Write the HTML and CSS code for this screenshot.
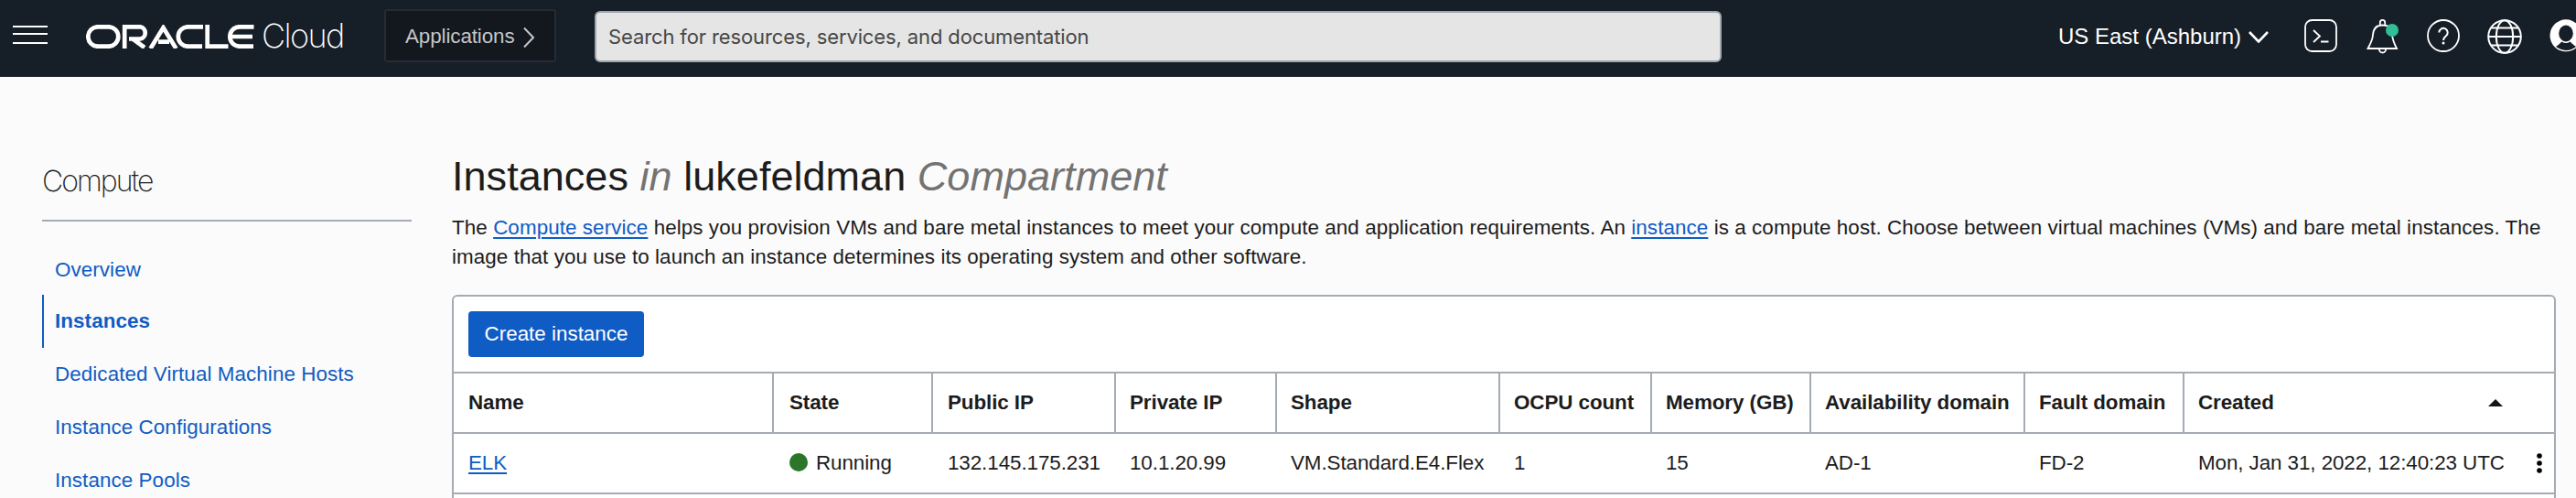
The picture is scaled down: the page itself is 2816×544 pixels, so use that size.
FILE: index.html
```html
<!DOCTYPE html>
<html lang="en">
<head>
<meta charset="utf-8">
<title>Instances | Oracle Cloud</title>
<link rel="stylesheet" href="styles.css">
</head>
<body>
<header class="topbar">
  <svg class="burger" viewBox="0 0 38 20"><path d="M0 1h38M0 9h38M0 19h38" fill="none" stroke="#fff" stroke-width="2"/></svg>
  <div class="logo">
    <svg class="oracle" viewBox="0 0 184 26" role="img" aria-label="Oracle"><g fill="none" stroke="#fff" stroke-width="4.700">
      <rect x="2.300" y="2.300" width="33" height="21.400" rx="10.700"/>
      <path d="M42.200 26V2.300h17a6.700 6.700 0 0 1 0 13.200H47M50.500 15l13.500 10"/>
      <path d="M70.500 26L84.500 3.200 98.500 26M79 18.700h12"/>
      <path d="M128 2.300h-16.500a10.700 10.700 0 0 0 0 21.400h15.500"/>
      <path d="M132.700 0v23.700H155.500"/>
      <path d="M183.500 2.300h-15.500a10.700 10.700 0 0 0 0 21.400h15M158 13h24"/></g></svg>
    <span class="cloud">Cloud</span>
  </div>
  <div class="apps"><span class="apps-text">Applications</span><svg class="chev-r" viewBox="0 0 12 22"><path d="M1 .500l10 10.500L1 21.500" fill="none" stroke="#c4c6c8" stroke-width="2"/></svg></div>
  <div class="search">Search for resources, services, and documentation</div>
  <div class="region"><span>US East (Ashburn)</span><svg class="chev-d" viewBox="0 0 22 13"><path d="M1 1l10 10.500L21 1" fill="none" stroke="#fff" stroke-width="2.600"/></svg></div>
  <div class="icons">
    <svg class="ic" viewBox="0 0 40 40"><rect x="3" y="2" width="34" height="34" rx="7.500" fill="none" stroke="#fff" stroke-width="1.800"/><path d="M12 13l7 6.500-7 6.500M20 25.500h8.500" fill="none" stroke="#fff" stroke-width="1.800"/></svg>
    <svg class="ic" viewBox="0 0 40 40"><path d="M4.500 33h31.500C33 27 31.300 23 31 18c0-8-4-10.500-10.500-10.500S10.500 11 10 18c-.3 6-3 10-5.500 15zM17.800 7.500V4.500a2.700 2.700 0 0 1 5.400 0v3M16.800 33.500a3.700 4 0 0 0 7.400 0" fill="none" stroke="#fff" stroke-width="1.800"/><circle cx="31" cy="13" r="7" fill="#31bd96"/></svg>
    <svg class="ic" viewBox="0 0 40 40"><circle cx="20" cy="19" r="17" fill="none" stroke="#fff" stroke-width="1.800"/><path d="M15.300 15.500a4.700 4.700 0 1 1 7.600 3.800c-2 1.500-2.900 2.200-2.900 4.700" fill="none" stroke="#fff" stroke-width="2"/><circle cx="20" cy="27" r="1.500" fill="#fff"/></svg>
    <svg class="ic" viewBox="0 0 40 40"><g fill="none" stroke="#fff" stroke-width="2"><circle cx="20" cy="20" r="17.800"/><ellipse cx="20" cy="20" rx="9.200" ry="17.800"/><path d="M2 20h36M5 10.500h30M5 29.500h30"/></g></svg>
    <svg class="ic" viewBox="0 0 40 40"><circle cx="20" cy="18.800" r="17.500" fill="#fff"/><ellipse cx="20" cy="16.500" rx="7.800" ry="9" fill="#161e27"/><path d="M9 31q3-2 6.500-5.500q4.500 3 9 0q3.500 3.500 6.500 5.500q-10 8-22 0z" fill="#161e27"/></svg>
  </div>
</header>
<div class="page">
  <nav class="side">
    <h2 class="side-title">Compute</h2>
    <a class="nav first">Overview</a>
    <a class="nav on">Instances</a>
    <a class="nav">Dedicated Virtual Machine Hosts</a>
    <a class="nav">Instance Configurations</a>
    <a class="nav last">Instance Pools</a>
  </nav>
  <main class="main">
    <h1 class="title">Instances <i>in</i> lukefeldman <i>Compartment</i></h1>
    <p class="desc">The <a class="lnk">Compute service</a> helps you provision VMs and bare metal instances to meet your compute and application requirements. An <a class="lnk">instance</a> is a compute host. Choose between virtual machines (VMs) and bare metal instances. The<br>image that you use to launch an instance determines its operating system and other software.</p>
    <section class="panel">
      <div class="tools"><button class="create">Create instance</button></div>
      <div class="row head">
        <div class="cell">Name</div><div class="cell">State</div><div class="cell">Public IP</div><div class="cell">Private IP</div><div class="cell">Shape</div><div class="cell">OCPU count</div><div class="cell">Memory (GB)</div><div class="cell">Availability domain</div><div class="cell">Fault domain</div><div class="cell created">Created<svg class="sort" viewBox="0 0 16 8"><path d="M8 0l8 8H0z" fill="#161513"/></svg></div>
      </div>
      <div class="row">
        <div class="cell"><a class="lnk">ELK</a></div><div class="cell"><span class="dot"></span>Running</div><div class="cell">132.145.175.231</div><div class="cell">10.1.20.99</div><div class="cell">VM.Standard.E4.Flex</div><div class="cell">1</div><div class="cell">15</div><div class="cell">AD-1</div><div class="cell">FD-2</div><div class="cell created">Mon, Jan 31, 2022, 12:40:23 UTC<svg class="kebab" viewBox="0 0 6 22"><circle cx="3" cy="3" r="2.800"/><circle cx="3" cy="11" r="2.800"/><circle cx="3" cy="19" r="2.800"/></svg></div>
      </div>
    </section>
  </main>
</div>
</body>
</html>
```
FILE: styles.css
```css
* { box-sizing: border-box; }
html, body { margin: 0; height: 544px; overflow: hidden; }
body { background: #fbfbfb; color: #1c1c1c; font: 22.4px/32px "Liberation Sans", Arial, sans-serif; white-space: nowrap; }
a { color: #0f5cc4; }
.topbar { height: 84px; background: #161e27; display: flex; align-items: flex-start; color: #fff; overflow: hidden; }
.burger { width: 38px; height: 20px; margin: 28px 0 0 14px; flex: none; }
.logo { display: flex; margin-left: 42px; width: 326px; height: 84px; flex: none; }
.oracle { width: 184px; height: 26px; margin-top: 27px; flex: none; }
.cloud { font: 250 36px/40px Inter, sans-serif; letter-spacing: -1.6px; margin: 19px 0 0 8px; }
.apps { width: 188px; height: 58px; margin-top: 10px; border: 2px solid #272c34; border-radius: 3px; background: #13171e; color: #c4c6c8; display: flex; align-items: center; padding-left: 21px; flex: none; }
.apps-text { width: 120px; font-size: 22.4px; letter-spacing: -.1px; padding-top: 2px; }
.chev-r { width: 12px; height: 22px; margin-left: 9px; margin-top: 4px; }
.search { width: 1232px; height: 56px; margin: 12px 0 0 42px; border: 2px solid #9ea6af; border-radius: 6px; background: #e5e5e5; color: #474747; padding: 10px 13px; font: 22px/32px Inter, sans-serif; letter-spacing: -.12px; flex: none; }
.region { display: flex; margin-left: 368px; padding-top: 24px; width: 267px; flex: none; font-size: 24px; }
.chev-d { width: 22px; height: 13px; margin: 10px 0 0 8px; }
.icons { display: flex; gap: 27px; margin: 20px 0 0; flex: none; }
.ic { width: 40px; height: 40px; flex: none; }
.page { display: flex; height: 460px; overflow: hidden; }
.side { width: 404px; margin-left: 46px; flex: none; }
.side-title { margin: 0 0 22px; height: 158px; padding-top: 92px; border-bottom: 2px solid #a4abb3; font: 200 32px/44px Inter, sans-serif; letter-spacing: -2px; color: #1c1c1c; }
.nav { display: block; height: 58px; padding: 13px 0 0 12px; border-left: 2px solid transparent; letter-spacing: .08px; }
.nav.on { border-color: #0f5cc4; font-weight: 700; }
.nav.first { padding-top: 15px; }
.nav.last { height: 46px; }
.main { margin-left: 44px; width: 2300px; flex: none; }
.title { margin: 0; padding-top: 82px; font-size: 45px; line-height: 54px; font-weight: 400; letter-spacing: .04px; }
.title i { color: #737373; }
.desc { margin: 13px 0 0; height: 89px; letter-spacing: .08px; }
.lnk { text-decoration: underline; text-decoration-thickness: 2px; text-underline-offset: 3px; }
.panel { border: 2px solid #a4abb3; border-bottom: 0; border-radius: 6px 6px 0 0; background: #fff; height: 222px; }
.tools { height: 84px; padding: 16px 16px; border-bottom: 2px solid #a4abb3; }
.create { display: block; width: 192px; height: 50px; border: 0; border-radius: 4px; background: #0f5cc4; color: #fff; font: 22.4px "Liberation Sans", sans-serif; padding: 0; }
.row { display: grid; grid-template-columns: 350px 174px 200px 176px 244px 166px 174px 234px 174px 1fr; height: 66px; border-bottom: 2px solid #a4abb3; letter-spacing: -.08px; }
.cell { display: flex; align-items: center; padding-left: 16px; }
.row .cell:nth-child(2) { padding-left: 17px; }
.row .cell:nth-child(n+4) { padding-left: 15px; }
.head .cell { font-weight: 700; border-right: 2px solid #a4abb3; }
.head .created { border-right: 0; }
.created { justify-content: space-between; }
.sort { width: 16px; height: 8px; margin-right: 56px; }
.kebab { width: 6px; height: 22px; margin-right: 13px; }
.dot { width: 20px; height: 20px; border-radius: 50%; background: #2b7629; margin-right: 9px; margin-top: -2px; }
```
